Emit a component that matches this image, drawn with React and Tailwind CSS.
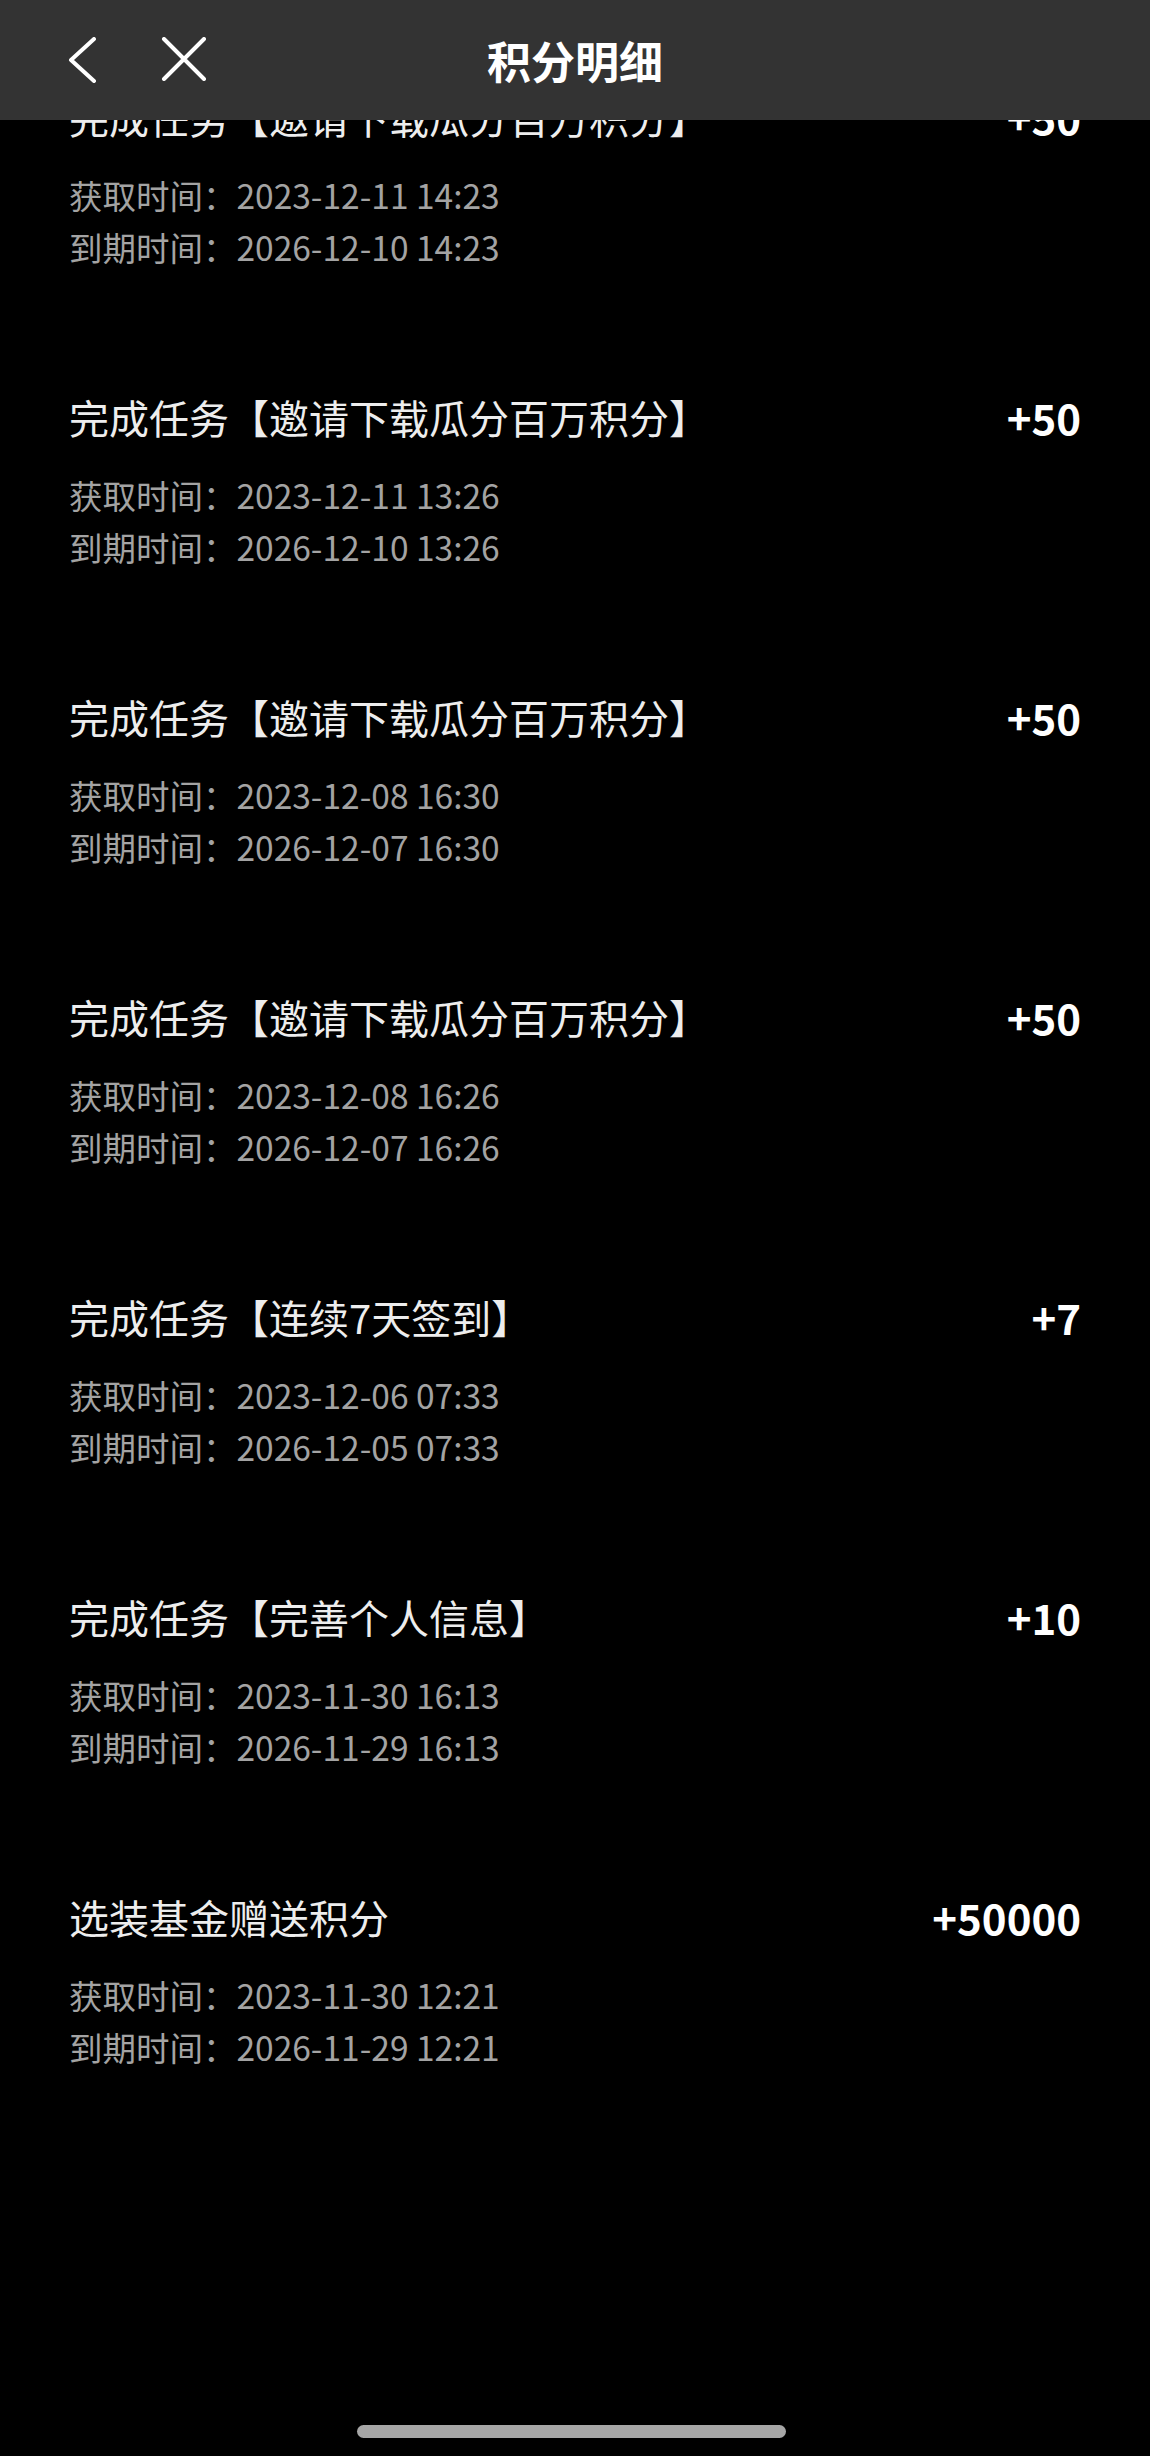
import React from "react";

const records = [
  { title: "完成任务【邀请下载瓜分百万积分】", amount: "+50", got: "2023-12-11 14:23", expire: "2026-12-10 14:23" },
  { title: "完成任务【邀请下载瓜分百万积分】", amount: "+50", got: "2023-12-11 13:26", expire: "2026-12-10 13:26" },
  { title: "完成任务【邀请下载瓜分百万积分】", amount: "+50", got: "2023-12-08 16:30", expire: "2026-12-07 16:30" },
  { title: "完成任务【邀请下载瓜分百万积分】", amount: "+50", got: "2023-12-08 16:26", expire: "2026-12-07 16:26" },
  { title: "完成任务【连续7天签到】", amount: "+7", got: "2023-12-06 07:33", expire: "2026-12-05 07:33" },
  { title: "完成任务【完善个人信息】", amount: "+10", got: "2023-11-30 16:13", expire: "2026-11-29 16:13" },
  { title: "选装基金赠送积分", amount: "+50000", got: "2023-11-30 12:21", expire: "2026-11-29 12:21" },
];

export default function App() {
  return (
    <div
      className="relative w-[1150px] h-[2456px] bg-black overflow-hidden"
      style={{ fontFamily: '"Noto Sans CJK SC", "Noto Sans", sans-serif' }}
    >
      {/* list */}
      <div className="pt-[92px] px-[69px]">
        {records.map((r, i) => (
          <div key={i} className="h-[300px]">
            <div className="flex justify-between items-center h-[50px]">
              <span className="text-[40px] text-[#ededed] leading-[50px]">{r.title}</span>
              <span className="text-[42px] font-bold text-white leading-[50px]">{r.amount}</span>
            </div>
            <div className="mt-[27px] text-[33.5px] text-[#a3a3a3] leading-[52px]">
              <div>获取时间：{r.got}</div>
              <div>到期时间：{r.expire}</div>
            </div>
          </div>
        ))}
      </div>

      {/* header */}
      <div className="absolute top-0 left-0 right-0 h-[120px] bg-[#333333] flex items-center">
        <svg className="absolute left-[66px] top-[37px]" width="32" height="46" viewBox="0 0 32 46" fill="none">
          <path d="M28 2 L5 23 L28 44" stroke="white" strokeWidth="4" strokeLinecap="round" strokeLinejoin="round" />
        </svg>
        <svg className="absolute left-[161px] top-[37px]" width="46" height="44" viewBox="0 0 46 44" fill="none">
          <path d="M3 2 L43 42 M43 2 L3 42" stroke="white" strokeWidth="4" strokeLinecap="round" />
        </svg>
        <div className="w-full text-center text-[44px] font-bold text-white">积分明细</div>
      </div>

      {/* home indicator */}
      <div className="absolute bottom-[18px] left-[357px] w-[429px] h-[13px] rounded-full bg-[#a6a6a6]" />
    </div>
  );
}
